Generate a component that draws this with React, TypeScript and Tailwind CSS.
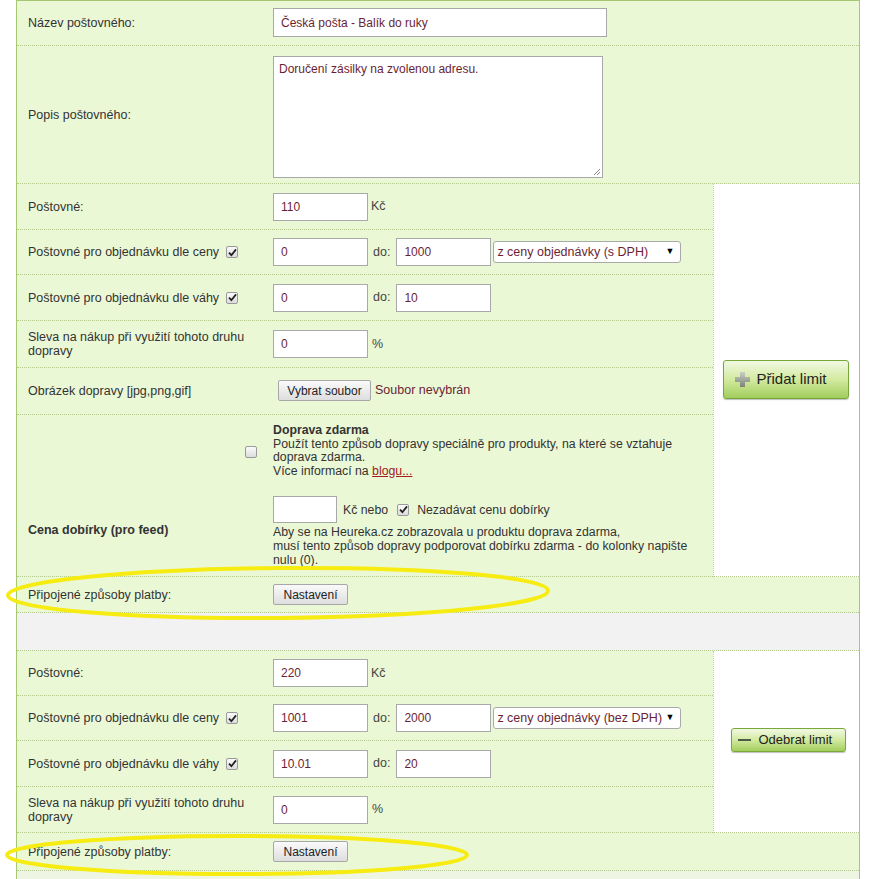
import React from "react";

const F = { fontFamily: '"Liberation Sans", Arial, sans-serif' };

function TextInput({ value, w = "w-[95px]", h = "h-[28px]" }: { value: string; w?: string; h?: string }) {
  return (
    <div className={`${w} ${h} bg-white border border-[#a9a9a9] flex items-center pl-[7px] text-[12px] text-[#6b1f35]`}>
      {value}
    </div>
  );
}

function Check({ checked }: { checked: boolean }) {
  return (
    <span className="inline-flex w-[12px] h-[12px] rounded-[2px] border border-[#9a9a9a] bg-gradient-to-b from-[#fbfbfb] to-[#dcdcdc] items-center justify-center">
      {checked && (
        <svg width="9" height="9" viewBox="0 0 9 9">
          <path d="M1 4.6 L3.4 7.2 L8 1.4" stroke="#222" strokeWidth="1.8" fill="none" />
        </svg>
      )}
    </span>
  );
}

function Select({ text }: { text: string }) {
  return (
    <div className="w-[188px] h-[22px] bg-white border border-[#a9a9a9] rounded-[3px] flex items-center justify-between pl-[3px] pr-[6px] text-[12.5px] text-[#6b1f35]" style={{ fontFamily: '"Liberation Sans", Arial, sans-serif' }}>
      <span>{text}</span>
      <span className="text-[9px] text-black">▼</span>
    </div>
  );
}

function GreyButton({ children, w }: { children: React.ReactNode; w: string }) {
  return (
    <div className={`${w} h-[21px] border border-[#a7a7a7] rounded-[2px] bg-gradient-to-b from-[#fafafa] to-[#dedede] flex items-center justify-center text-[12px] text-[#222]`}>
      {children}
    </div>
  );
}

function Row({ label, h, children, border = true, bold = false }: { label: React.ReactNode; h: string; children?: React.ReactNode; border?: boolean; bold?: boolean }) {
  return (
    <div className={`flex ${h} ${border ? "border-b border-dotted border-[#b3c98e]" : ""}`}>
      <div className={`w-[245px] shrink-0 pl-[11px] pr-[4px] flex items-center text-[12.5px] leading-[14px] text-[#333] ${bold ? "font-bold" : ""}`}>
        {label}
      </div>
      <div className="flex-1 pl-[11px] flex items-center text-[12.5px] text-[#444]">{children}</div>
    </div>
  );
}

function PriceRows({ a, b, c, d, e, sel, sleva, heights }: { a: string; b: string; c: string; d: string; e: string; sel: string; sleva: string; heights: string[] }) {
  return (
    <>
      <Row label="Poštovné:" h={heights[0]}>
        <TextInput value={a} />
        <span className="ml-[3px]">Kč</span>
      </Row>
      <Row
        h={heights[1]}
        label={
          <span className="flex items-center gap-[7px]">
            Poštovné pro objednávku dle ceny <Check checked />
          </span>
        }
      >
        <TextInput value={b} />
        <span className="ml-[5px] mr-[6px]">do:</span>
        <TextInput value={c} />
        <div className="ml-[2px]">
          <Select text={sel} />
        </div>
      </Row>
      <Row
        h={heights[2]}
        label={
          <span className="flex items-center gap-[7px]">
            Poštovné pro objednávku dle váhy <Check checked />
          </span>
        }
      >
        <TextInput value={d} />
        <span className="ml-[5px] mr-[6px]">do:</span>
        <TextInput value={e} />
      </Row>
      <Row
        h={heights[3]}
        label={
          <span>
            Sleva na nákup při využití tohoto druhu
            <br />
            dopravy
          </span>
        }
      >
        <TextInput value={sleva} />
        <span className="ml-[4px]">%</span>
      </Row>
    </>
  );
}

function GreenButton({ children, cls }: { children: React.ReactNode; cls: string }) {
  return (
    <div className={`${cls} border border-[#78a83a] rounded-[3px] bg-gradient-to-b from-[#f1f9e3] via-[#d3ea9f] to-[#a2cd5c] shadow-[0_1px_1px_rgba(0,0,0,0.25)] flex items-center text-[#222]`}>
      {children}
    </div>
  );
}

export default function App() {
  return (
    <div className="relative w-[869px] h-[879px] overflow-hidden bg-white" style={F}>
      <div className="ml-[16px] w-[844px] border-x border-t border-[#a6c873] bg-[#ebf8d6]">
        {/* Row 1 */}
        <Row label="Název poštovného:" h="h-[45px]">
          <div className="-mt-[1px]">
            <TextInput value="Česká pošta - Balík do ruky" w="w-[334px]" h="h-[29px]" />
          </div>
        </Row>
        {/* Row 2 */}
        <Row label="Popis poštovného:" h="h-[138px]">
          <div className="relative w-[330px] h-[122px] bg-white border border-[#a9a9a9] pl-[5px] pt-[3px] text-[12px] text-[#6b1f35] self-start mt-[10px]">
            Doručení zásilky na zvolenou adresu.
            <svg className="absolute right-[1px] bottom-[1px]" width="8" height="8" viewBox="0 0 8 8">
              <path d="M7 1 L1 7 M7 4 L4 7" stroke="#888" strokeWidth="1" />
            </svg>
          </div>
        </Row>

        {/* Section 1 */}
        <div className="flex">
          <div className="w-[696px] shrink-0">
            <PriceRows a="110" b="0" c="1000" d="0" e="10" sel="z ceny objednávky (s DPH)" sleva="0" heights={["h-[46px]", "h-[45px]", "h-[46px]", "h-[47px]"]} />
            <Row label="Obrázek dopravy [jpg,png,gif]" h="h-[47px]">
              <div className="ml-[5px] flex items-center -mt-[1px]">
                <GreyButton w="w-[93px]">Vybrat soubor</GreyButton>
                <span className="ml-[4px] text-[#6b1f35]">Soubor nevybrán</span>
              </div>
            </Row>
            <div className="border-b border-dotted border-[#b3c98e] h-[162px]">
              <div className="flex h-[73px]">
                <div className="w-[245px] shrink-0 flex items-center justify-end pr-[5px] pt-[1px]">
                  <Check checked={false} />
                </div>
                <div className="flex-1 pl-[11px] pt-[9px] text-[12.3px] leading-[13.5px] text-[#333]">
                  <div className="font-bold">Doprava zdarma</div>
                  <div>Použít tento způsob dopravy speciálně pro produkty, na které se vztahuje</div>
                  <div>doprava zdarma.</div>
                  <div>
                    Více informací na <span className="underline text-[#a0201a]">blogu...</span>
                  </div>
                </div>
              </div>
              <div className="flex h-[88px]">
                <div className="w-[245px] shrink-0 pl-[11px] flex items-center font-bold text-[12.5px] text-[#333] pb-[4px]">
                  Cena dobírky (pro feed)
                </div>
                <div className="flex-1 pl-[11px] pt-[8px] text-[12.3px] leading-[14px] text-[#333]">
                  <div className="flex items-center">
                    <TextInput value="" w="w-[64px]" h="h-[27px]" />
                    <span className="ml-[6px]">Kč nebo</span>
                    <span className="ml-[9px] mr-[8px] flex">
                      <Check checked />
                    </span>
                    <span>Nezadávat cenu dobírky</span>
                  </div>
                  <div className="mt-[2px]">Aby se na Heureka.cz zobrazovala u produktu doprava zdarma,</div>
                  <div>musí tento způsob dopravy podporovat dobírku zdarma - do kolonky napište</div>
                  <div>nulu (0).</div>
                </div>
              </div>
            </div>
          </div>
          <div className="flex-1 bg-white border-l border-dashed border-l-[#c8c8c8] border-b border-dotted border-b-[#b3c98e] flex items-center justify-center">
            <GreenButton cls="w-[126px] h-[39px] -ml-[2px] -mt-[2px]">
              <svg className="ml-[10px]" width="17" height="17" viewBox="0 0 17 17">
                <defs>
                  <linearGradient id="pg" x1="0" y1="0" x2="0" y2="1">
                    <stop offset="0" stopColor="#c9cfc2" />
                    <stop offset="1" stopColor="#7b8476" />
                  </linearGradient>
                </defs>
                <path d="M6 1 H11 V6 H16 V11 H11 V16 H6 V11 H1 V6 H6 Z" fill="url(#pg)" />
              </svg>
              <span className="ml-[6px] text-[15px]">Přidat limit</span>
            </GreenButton>
          </div>
        </div>

        <Row label="Připojené způsoby platby:" h="h-[36px]">
          <GreyButton w="w-[75px]">Nastavení</GreyButton>
        </Row>

        <div className="h-[38px] bg-[#f2f2f2] border-b border-dotted border-[#b3c98e]" />

        {/* Section 2 */}
        <div className="flex">
          <div className="w-[696px] shrink-0">
            <PriceRows a="220" b="1001" c="2000" d="10.01" e="20" sel="z ceny objednávky (bez DPH)" sleva="0" heights={["h-[45px]", "h-[45px]", "h-[46px]", "h-[46px]"]} />
          </div>
          <div className="flex-1 bg-white border-l border-dashed border-l-[#c8c8c8] border-b border-dotted border-b-[#b3c98e] flex items-center justify-center">
            <GreenButton cls="w-[115px] h-[24px] ml-[3px] -mt-[3px]">
              <span className="ml-[6px] w-[13px] h-[2px] bg-[#4e5a48]" />
              <span className="ml-[8px] text-[13px]">Odebrat limit</span>
            </GreenButton>
          </div>
        </div>

        <Row label="Připojené způsoby platby:" h="h-[38px]">
          <GreyButton w="w-[75px]">Nastavení</GreyButton>
        </Row>
        <div className="h-[20px] bg-[#eef5e3]" />
      </div>

      {/* Annotation ellipses */}
      <svg className="absolute left-0 top-0 pointer-events-none" width="869" height="879">
        <ellipse cx="278" cy="593" rx="270" ry="25" fill="none" stroke="#f7ec12" strokeWidth="4" transform="rotate(-0.5 278 593)" />
        <ellipse cx="237" cy="855" rx="230" ry="19" fill="none" stroke="#f7ec12" strokeWidth="4" />
      </svg>
    </div>
  );
}
